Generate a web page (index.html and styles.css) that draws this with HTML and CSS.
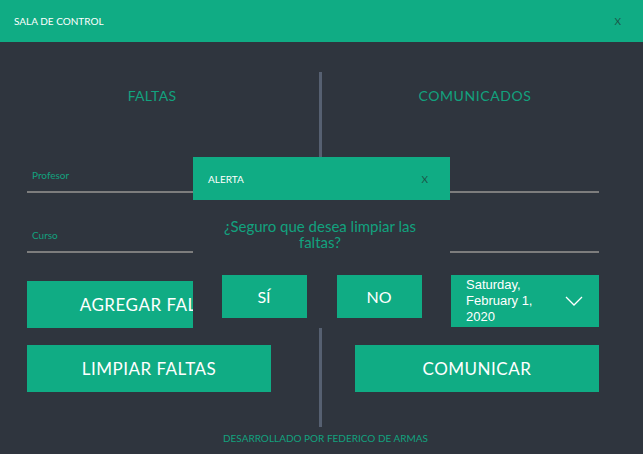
FILE: index.html
```html
<!DOCTYPE html>
<html lang="es">
<head>
<meta charset="utf-8">
<title>Sala de control</title>
<link rel="stylesheet" href="styles.css">
</head>
<body>
<div class="app">
  <header class="titlebar">
    <span class="titlebar-text">SALA DE CONTROL</span>
    <span class="titlebar-close">X</span>
  </header>
  <main class="main">
    <section class="col">
      <h2 class="col-title col-title-left">FALTAS</h2>
      <div class="field field-first">
        <span class="field-label">Profesor</span>
        <div class="field-line"></div>
      </div>
      <div class="field field-second">
        <span class="field-label">Curso</span>
        <div class="field-line"></div>
      </div>
      <button class="btn btn-add">AGREGAR FALTAS</button>
      <button class="btn btn-second">LIMPIAR FALTAS</button>
    </section>
    <div class="spacer-a"></div>
    <div class="divider"></div>
    <div class="spacer-b"></div>
    <section class="col">
      <h2 class="col-title col-title-right">COMUNICADOS</h2>
      <div class="field field-first">
        <span class="field-label"></span>
        <div class="field-line"></div>
      </div>
      <div class="field field-second">
        <span class="field-label"></span>
        <div class="field-line"></div>
      </div>
      <div class="datepicker">
        <div class="date-text">Saturday,<br>February 1,<br>2020</div>
        <svg class="chevron" width="18" height="10" viewBox="0 0 18 10"><path d="M1 1 L9 9 L17 1" fill="none" stroke="#ffffff" stroke-width="1.3"/></svg>
      </div>
      <button class="btn btn-comm">COMUNICAR</button>
    </section>
  </main>
  <footer class="footer">DESARROLLADO POR FEDERICO DE ARMAS</footer>

  <div class="dialog">
    <div class="dialog-head">
      <span class="dialog-title">ALERTA</span>
      <span class="dialog-close">X</span>
    </div>
    <p class="dialog-msg">¿Seguro que desea limpiar las<br>faltas?</p>
    <div class="dialog-actions">
      <button class="dbtn">SÍ</button>
      <button class="dbtn">NO</button>
    </div>
  </div>
</div>
</body>
</html>
```

FILE: styles.css
```css
* { box-sizing: border-box; }
html, body { margin: 0; padding: 0; }
body {
  background: #2f353e;
  font-family: Lato, "Open Sans", sans-serif;
  width: 643px;
  height: 454px;
  overflow: hidden;
}
.app {
  position: relative;
  width: 643px;
  height: 454px;
}
.titlebar {
  height: 42px;
  background: #10ac84;
  display: flex;
  align-items: center;
  justify-content: space-between;
  padding: 0 22px 0 14px;
}
.titlebar-text {
  color: #ffffff;
  font-size: 10px;
}
.titlebar-close {
  color: #1c5647;
  font-size: 10px;
}
.main {
  display: grid;
  grid-template-columns: 244px 48px 3px 33px 244px;
  padding: 30px 0 0 27px;
  height: 385px;
}
.divider {
  background: #566071;
  height: 355px;
}
.col {
  display: flex;
  flex-direction: column;
}
.col-title {
  margin: 14px 0 0;
  height: 20px;
  line-height: 20px;
  font-size: 14px;
  font-weight: normal;
  color: #12a27e;
  text-align: center;
  letter-spacing: 0.3px;
}
.col-title-left { padding-left: 6px; }
.col-title-right { padding-right: 4px; letter-spacing: 0.6px; }
.field { display: flex; flex-direction: column; }
.field-first { margin-top: 62px; }
.field-second { margin-top: 35px; }
.field-label {
  height: 14px;
  line-height: 14px;
  font-size: 10px;
  color: #12a27e;
  padding-left: 5px;
}
.field-line {
  margin-top: 9px;
  height: 2px;
  background: #7d7d7d;
}
.btn {
  border: 0;
  margin: 0;
  padding: 0;
  background: #10ac84;
  color: #ffffff;
  font-family: Lato, "Open Sans", sans-serif;
  font-size: 17px;
  letter-spacing: 0.5px;
  height: 47px;
  width: 244px;
  text-align: center;
}
.btn-add { margin-top: 28px; padding-left: 8px; }
.btn-second { margin-top: 17px; }
.btn-comm { margin-top: 18px; }
.datepicker {
  margin-top: 22px;
  align-self: flex-end;
  width: 148px;
  height: 52px;
  background: #10ac84;
  display: flex;
  align-items: center;
  justify-content: space-between;
  padding: 0 16px 0 15px;
}
.date-text {
  font-family: "Liberation Sans", Arial, sans-serif;
  font-size: 13px;
  line-height: 16px;
  color: #ffffff;
}
.chevron { display: block; }
.footer {
  margin-top: 5px;
  text-align: center;
  font-size: 10px;
  line-height: 12px;
  color: #12a27e;
  padding-left: 8px;
}
.dialog {
  position: absolute;
  left: 193px;
  top: 157px;
  width: 257px;
  height: 171px;
  background: #2f353e;
}
.dialog-head {
  height: 43px;
  background: #10ac84;
  display: flex;
  align-items: center;
  justify-content: space-between;
  padding: 0 22px 0 15px;
}
.dialog-title { color: #ffffff; font-size: 10px; }
.dialog-close { color: #1c5647; font-size: 10px; }
.dialog-msg {
  margin: 18px 0 0;
  text-align: center;
  font-size: 15px;
  line-height: 16px;
  color: #12a27e;
  padding-right: 3px;
}
.dialog-actions {
  margin-top: 25px;
  display: flex;
  justify-content: center;
  gap: 30px;
}
.dbtn {
  border: 0;
  margin: 0;
  padding: 0;
  width: 85px;
  height: 43px;
  background: #10ac84;
  color: #ffffff;
  font-family: Lato, "Open Sans", sans-serif;
  font-size: 16px;
}
```
